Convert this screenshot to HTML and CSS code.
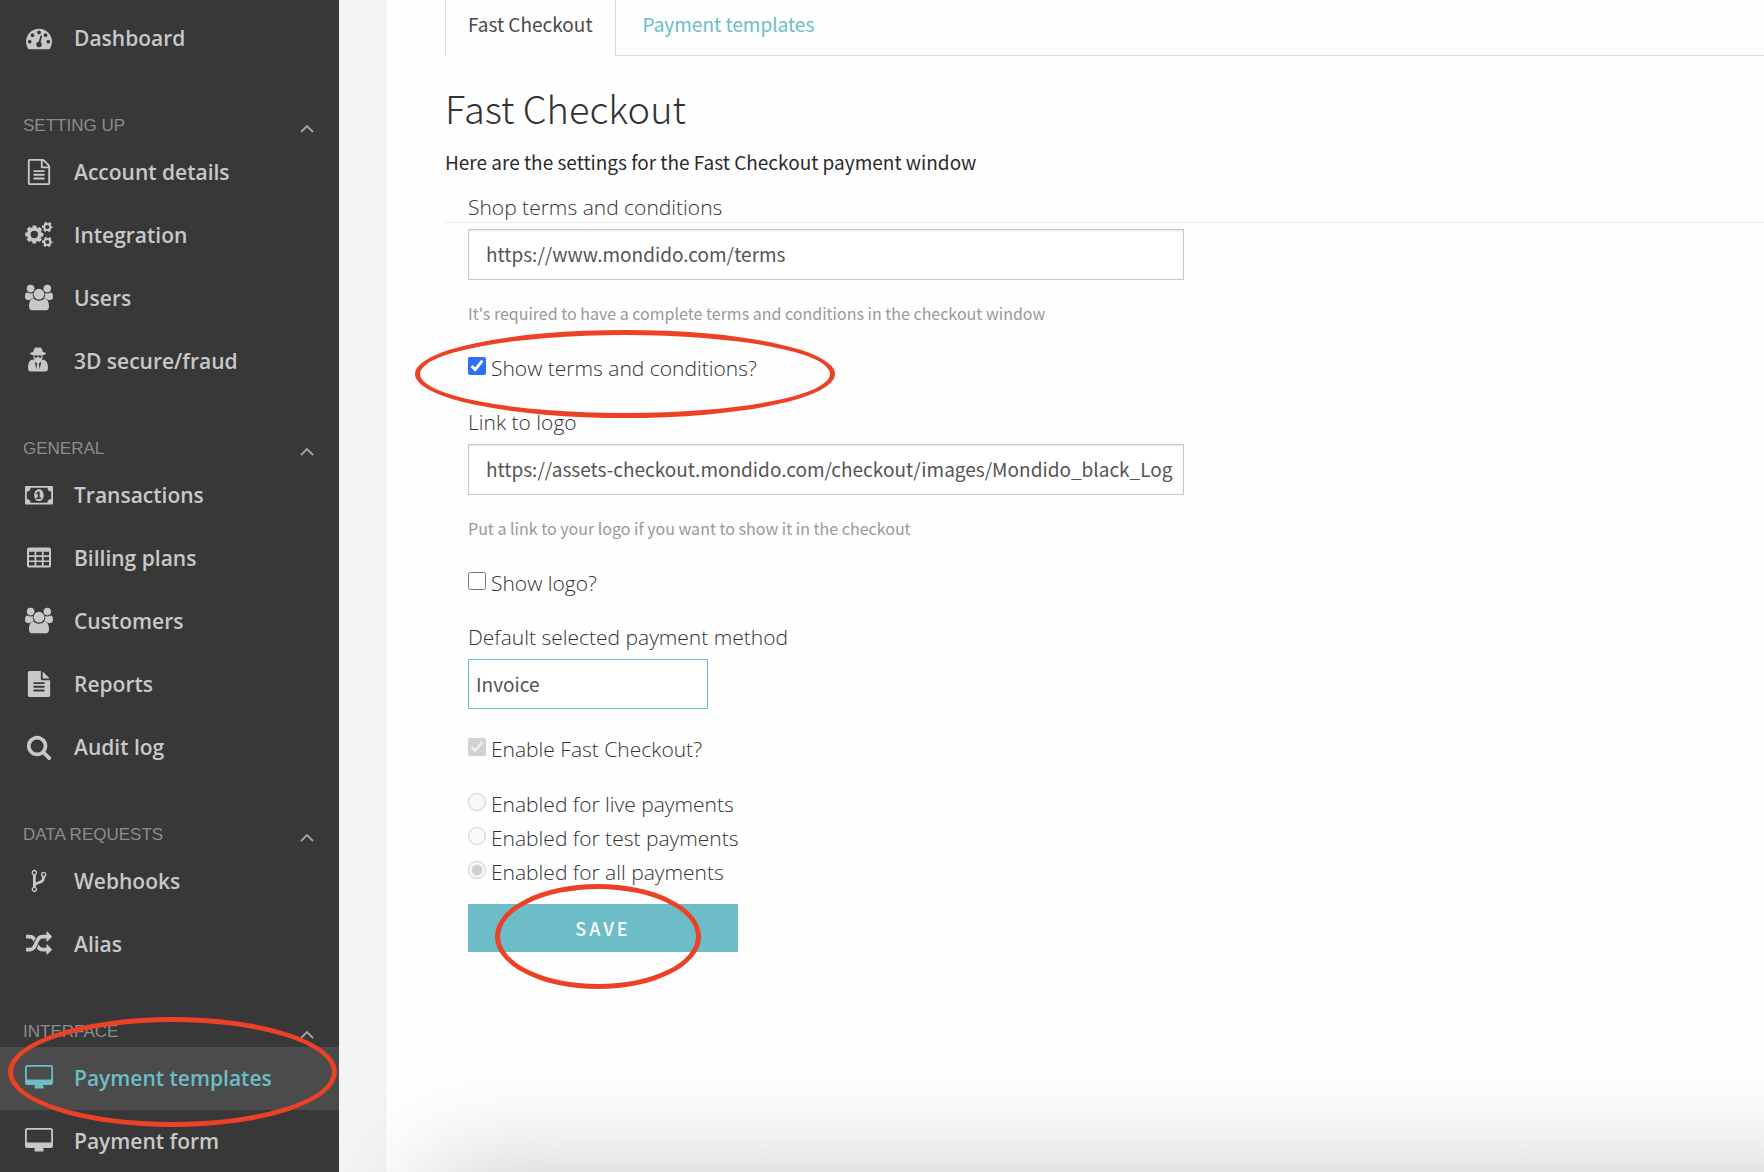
FILE: index.html
```html
<!DOCTYPE html>
<html lang="en">
<head>
<meta charset="utf-8">
<title>Fast Checkout</title>
<link rel="stylesheet" href="styles.css">
</head>
<body>
<svg class="sprite" aria-hidden="true">
  <symbol id="i-dashboard" viewBox="0 0 1792 1792"><path d="M384 1152q0-53-37.5-90.5t-90.5-37.5-90.5 37.5-37.5 90.5 37.5 90.5 90.5 37.5 90.5-37.5 37.5-90.5zm192-448q0-53-37.5-90.5t-90.5-37.5-90.5 37.5-37.5 90.5 37.5 90.5 90.5 37.5 90.5-37.5 37.5-90.5zm428 481l101-382q6-26-7.5-48.5t-38.5-29.5-48 6.5-30 39.5l-101 382q-60 5-107 43.5t-63 98.5q-20 77 20 146t117 89 146-20 89-117q16-60-6-117t-72-91zm660-33q0-53-37.5-90.5t-90.5-37.5-90.5 37.5-37.5 90.5 37.5 90.5 90.5 37.5 90.5-37.5 37.5-90.5zm-640-640q0-53-37.5-90.5t-90.5-37.5-90.5 37.5-37.5 90.5 37.5 90.5 90.5 37.5 90.5-37.5 37.5-90.5zm448 192q0-53-37.5-90.5t-90.5-37.5-90.5 37.5-37.5 90.5 37.5 90.5 90.5 37.5 90.5-37.5 37.5-90.5zm320 448q0 261-141 483-19 29-54 29h-1402q-35 0-54-29-141-221-141-483 0-182 71-348t191-286 286-191 348-71 348 71 286 191 191 286 71 348z"/></symbol>
  <symbol id="i-file-o" viewBox="0 0 1792 1792"><path d="M1596 380q28 28 48 76t20 88v1152q0 40-28 68t-68 28h-1344q-40 0-68-28t-28-68v-1600q0-40 28-68t68-28h896q40 0 88 20t76 48zm-444-244v376h376q-10-29-22-41l-313-313q-12-12-41-22zm384 1528v-1024h-416q-40 0-68-28t-28-68v-416h-768v1536h1280zm-1024-864q0-14 9-23t23-9h704q14 0 23 9t9 23v64q0 14-9 23t-23 9h-704q-14 0-23-9t-9-23v-64zm736 224q14 0 23 9t9 23v64q0 14-9 23t-23 9h-704q-14 0-23-9t-9-23v-64q0-14 9-23t23-9h704zm0 256q14 0 23 9t9 23v64q0 14-9 23t-23 9h-704q-14 0-23-9t-9-23v-64q0-14 9-23t23-9h704z"/></symbol>
  <symbol id="i-file" viewBox="0 0 1792 1792"><path d="M1596 476q14 14 28 36h-472v-472q22 14 36 28zm-476 164h544v1056q0 40-28 68t-68 28h-1344q-40 0-68-28t-28-68v-1600q0-40 28-68t68-28h800v544q0 40 28 68t68 28zm160 736v-64q0-14-9-23t-23-9h-704q-14 0-23 9t-9 23v64q0 14 9 23t23 9h704q14 0 23-9t9-23zm0-256v-64q0-14-9-23t-23-9h-704q-14 0-23 9t-9 23v64q0 14 9 23t23 9h704q14 0 23-9t9-23zm0-256v-64q0-14-9-23t-23-9h-704q-14 0-23 9t-9 23v64q0 14 9 23t23 9h704q14 0 23-9t9-23z"/></symbol>
  <symbol id="i-search" viewBox="0 0 1792 1792"><path d="M1216 832q0-185-131.5-316.5t-316.5-131.5-316.5 131.5-131.5 316.5 131.5 316.5 316.5 131.5 316.5-131.5 131.5-316.5zm512 832q0 52-38 90t-90 38q-54 0-90-38l-343-342q-179 124-399 124-143 0-273.5-55.5t-225-150-150-225-55.5-273.5 55.5-273.5 150-225 225-150 273.5-55.5 273.5 55.5 225 150 150 225 55.5 273.5q0 220-124 399l343 343q37 37 37 90z"/></symbol>
  <symbol id="i-random" viewBox="0 0 1792 1792"><path d="M666 481q-60 92-137 273-22-45-37-72.5t-40.5-63.5-51-56.5-63-35-81.5-14.5h-224q-14 0-23-9t-9-23v-192q0-14 9-23t23-9h224q250 0 410 225zm1126 799q0 14-9 23l-320 320q-9 9-23 9-13 0-22.5-9.5t-9.5-22.5v-192q-32 0-85 .5t-81 1-73-1-71-5-64-10.5-63-18.5-58-28.5-59-40-55-53.5-56-69.5q59-93 136-273 22 45 37 72.5t40.5 63.5 51 56.5 63 35 81.5 14.5h256v-192q0-14 9-23t23-9q12 0 24 10l319 319q9 9 9 23zm0-896q0 14-9 23l-320 320q-9 9-23 9-13 0-22.5-9.5t-9.5-22.5v-192h-256q-48 0-87 15t-69 45-51 61.5-45 77.5q-32 62-78 171-29 66-49.5 111t-54 105-64 100-74 83-90 68.5-106.5 42-128 16.5h-224q-14 0-23-9t-9-23v-192q0-14 9-23t23-9h224q48 0 87-15t69-45 51-61.5 45-77.5q32-62 78-171 29-66 49.5-111t54-105 64-100 74-83 90-68.5 106.5-42 128-16.5h256v-192q0-14 9-23t23-9q12 0 24 10l319 319q9 9 9 23z"/></symbol>
  <symbol id="i-fork" viewBox="0 0 1792 1792"><path d="M672 1472q0-40-28-68t-68-28-68 28-28 68 28 68 68 28 68-28 28-68zm0-1152q0-40-28-68t-68-28-68 28-28 68 28 68 68 28 68-28 28-68zm640 128q0-40-28-68t-68-28-68 28-28 68 28 68 68 28 68-28 28-68zm96 0q0 52-26 96.5t-70 69.5q-2 287-226 414-67 38-203 81-128 40-169.5 71t-41.5 100v26q44 25 70 69.5t26 96.5q0 80-56 136t-136 56-136-56-56-136q0-52 26-96.5t70-69.5v-820q-44-25-70-69.5t-26-96.5q0-80 56-136t136-56 136 56 56 136q0 52-26 96.5t-70 69.5v497q54-26 154-57 55-17 87.5-29.5t70.5-31 59-39.5 40.5-51 28-69.5 8.5-91.5q-44-25-70-69.5t-26-96.5q0-80 56-136t136-56 136 56 56 136z"/></symbol>
  <symbol id="i-cogs" viewBox="0 0 28 28"><g fill="none" stroke="currentColor">
    <circle cx="9.300" cy="13.500" r="5.600" stroke-width="3.800"/><circle cx="9.300" cy="13.500" r="7.700" stroke-width="2.800" stroke-dasharray="3.700 2.347" stroke-dashoffset="1.850"/>
    <circle cx="22.300" cy="6" r="3.100" stroke-width="2"/><circle cx="22.300" cy="6" r="4.400" stroke-width="1.900" stroke-dasharray="2.300 2.308" stroke-dashoffset="1.150"/>
    <circle cx="22.300" cy="21" r="3.100" stroke-width="2"/><circle cx="22.300" cy="21" r="4.400" stroke-width="1.900" stroke-dasharray="2.300 2.308" stroke-dashoffset="1.150"/></g></symbol>
  <symbol id="i-users" viewBox="0 0 28 28"><circle cx="5.600" cy="4.600" r="3.800"/><circle cx="22.300" cy="4.600" r="3.800"/><circle cx="14" cy="10.200" r="5.400"/>
    <path d="M2.600 8.500c1 .6 2 .9 3 .9s1.500-.1 2.200-.4c-.3 2.100.2 4 1.400 5.600-1.700 0-3 .4-4.200 1.500H3c-2 0-3-1-3-3 0-2.500.5-4.600 2.600-4.600zM25.400 8.500c-1 .6-2 .9-3 .9s-1.500-.1-2.200-.4c.3 2.100-.2 4-1.400 5.600 1.700 0 3 .4 4.200 1.500h2c2 0 3-1 3-3 0-2.500-.5-4.600-2.600-4.600zM8.600 14.800c1.600 1.300 3.200 2 5.400 2s3.800-.7 5.400-2c3.200 0 4.600 2.900 4.600 7.600 0 2.600-1.400 3.900-3.800 3.900H7.800C5.400 26.300 4 25 4 22.400c0-4.700 1.400-7.600 4.600-7.600z"/></symbol>
  <symbol id="i-secret" viewBox="0 0 28 28"><path d="M9.500 1.300c.8-1.300 2.200-.5 3.500-.5s2.700-.8 3.500.5c.7 1.100 1 2.400 1.300 3.700 2 .4 3.200.9 3.200 1.500 0 .9-1.400 1.400-3.600 1.700.3 2.400-.1 3.900-.8 5.200l1.800-.8c3.400 1 4.600 4.400 4.600 8.600 0 2-1 3.300-3 3.300H6c-2 0-3-1.300-3-3.300 0-4.200 1.100-7.500 4.200-8.600l2.200.8c-.7-1.300-1.100-2.800-.8-5.200C6.400 7.900 5 7.400 5 6.500c0-.6 1.200-1.100 3.200-1.500.3-1.300.6-2.600 1.300-3.700z"/>
    <path class="cut" d="M9.200 8.500h7.600l-.5 2c-1.200.8-2.500.2-3-1.200h-.6c-.5 1.400-1.800 2-3 1.200zM9.800 14.800l2.400 1.700-.9 6zM16.200 14.800l-2.400 1.700.9 6z"/></symbol>
  <symbol id="i-money" viewBox="0 0 28 28"><path fill-rule="evenodd" d="M1 5h26q1 0 1 1v16.500q0 1-1 1H1q-1 0-1-1V6q0-1 1-1zm4.500 1.800A3.700 3.700 0 0 1 1.800 10.500v7.500a3.700 3.700 0 0 1 3.700 3.700h17a3.700 3.700 0 0 1 3.700-3.700v-7.500a3.700 3.700 0 0 1-3.700-3.700zM14 8.300c2.800 0 4.700 2.700 4.700 5.900S16.800 20.100 14 20.100s-4.700-2.700-4.700-5.900S11.200 8.300 14 8.300zm-.9 2.200-2.300 2 .9 1 1.100-.9v4h-1.600v1.400h5v-1.400h-1.500v-6.100z"/></symbol>
  <symbol id="i-table" viewBox="0 0 28 28"><path fill-rule="evenodd" d="M4 3.500h20q2 0 2 2v16q0 2-2 2H4q-2 0-2-2v-16q0-2 2-2zM4 7.800v3.500h5.600V7.800zm7.300 0v3.500h5.600V7.800zm7.300 0v3.500H24V7.800zM4 13v3.400h5.600V13zm7.300 0v3.400h5.600V13zm7.300 0v3.400H24V13zM4 18.100v3.500h5.600v-3.500zm7.300 0v3.500h5.600v-3.500zm7.300 0v3.500H24v-3.500z"/></symbol>
  <symbol id="i-desktop" viewBox="0 0 28 28"><path fill-rule="evenodd" d="M2.200 0h23.600Q28 0 28 2.200v15.600q0 2.200-2.200 2.200H18c0 1 .7 1.700.7 2.400q0 1.100-1 1.100H10.300q-1 0-1-1.100c0-.7.7-1.400.7-2.400H2.200Q0 20 0 17.800V2.200Q0 0 2.200 0zm.2 1.700q-.6 0-.6.600v12.300h24.400V2.300q0-.6-.6-.6z" transform="translate(0 1)"/></symbol>
  <symbol id="i-up" viewBox="0 0 14 9"><path d="M1 8l6-6 6 6" fill="none" stroke="currentColor" stroke-width="1.800"/></symbol>
</svg>

<div class="layout">
  <nav class="sidebar" aria-label="Main">
    <a class="item" href="#"><svg class="icon glyph"><use href="#i-dashboard"/></svg>Dashboard</a>

    <h2 class="section">SETTING UP<svg class="chevron"><use href="#i-up"/></svg></h2>
    <a class="item" href="#"><svg class="icon glyph"><use href="#i-file-o"/></svg>Account details</a>
    <a class="item" href="#"><svg class="icon"><use href="#i-cogs"/></svg>Integration</a>
    <a class="item" href="#"><svg class="icon"><use href="#i-users"/></svg>Users</a>
    <a class="item" href="#"><svg class="icon"><use href="#i-secret"/></svg>3D secure/fraud</a>

    <h2 class="section">GENERAL<svg class="chevron"><use href="#i-up"/></svg></h2>
    <a class="item" href="#"><svg class="icon"><use href="#i-money"/></svg>Transactions</a>
    <a class="item" href="#"><svg class="icon"><use href="#i-table"/></svg>Billing plans</a>
    <a class="item" href="#"><svg class="icon"><use href="#i-users"/></svg>Customers</a>
    <a class="item" href="#"><svg class="icon glyph"><use href="#i-file"/></svg>Reports</a>
    <a class="item" href="#"><svg class="icon glyph"><use href="#i-search"/></svg>Audit log</a>

    <h2 class="section">DATA REQUESTS<svg class="chevron"><use href="#i-up"/></svg></h2>
    <a class="item" href="#"><svg class="icon glyph"><use href="#i-fork"/></svg>Webhooks</a>
    <a class="item" href="#"><svg class="icon glyph"><use href="#i-random"/></svg>Alias</a>

    <h2 class="section">INTERFACE<svg class="chevron"><use href="#i-up"/></svg></h2>
    <a class="item active" href="#" aria-current="page"><svg class="icon"><use href="#i-desktop"/></svg>Payment templates<span class="ring ring-nav"></span></a>
    <a class="item" href="#"><svg class="icon"><use href="#i-desktop"/></svg>Payment form</a>
  </nav>

  <div class="stage">
    <main class="panel">
      <div class="tabs">
        <a class="tab current" href="#">Fast Checkout</a>
        <a class="tab" href="#">Payment templates</a>
      </div>

      <header class="intro">
        <h1 class="title">Fast Checkout</h1>
        <p class="lead">Here are the settings for the Fast Checkout payment window</p>
      </header>

      <form class="form">
        <label class="label" for="terms">Shop terms and conditions</label>
        <input class="text" id="terms" type="text" value="https://www.mondido.com/terms">
        <p class="help">It's required to have a complete terms and conditions in the checkout window</p>
        <div class="check spaced">
          <input class="box" id="show-terms" type="checkbox" checked>
          <label for="show-terms">Show terms and conditions?</label>
          <span class="ring ring-terms"></span>
        </div>

        <label class="label" for="logo">Link to logo</label>
        <input class="text" id="logo" type="text" value="https://assets-checkout.mondido.com/checkout/images/Mondido_black_Log">
        <p class="help">Put a link to your logo if you want to show it in the checkout</p>
        <div class="check spaced">
          <input class="box" id="show-logo" type="checkbox">
          <label for="show-logo">Show logo?</label>
        </div>

        <label class="label" for="method">Default selected payment method</label>
        <select class="select" id="method"><option>Invoice</option></select>

        <div class="check enable">
          <input class="box" id="enable" type="checkbox" checked disabled>
          <label for="enable">Enable Fast Checkout?</label>
        </div>

        <div class="check">
          <input class="box" id="live" name="mode" type="radio" disabled>
          <label for="live">Enabled for live payments</label>
        </div>
        <div class="check">
          <input class="box" id="test" name="mode" type="radio" disabled>
          <label for="test">Enabled for test payments</label>
        </div>
        <div class="check">
          <input class="box" id="all" name="mode" type="radio" checked disabled>
          <label for="all">Enabled for all payments</label>
        </div>

        <div class="actions">
          <button class="save" type="button">SAVE</button>
          <span class="ring ring-save"></span>
        </div>
      </form>
    </main>
  </div>
</div>
</body>
</html>
```
FILE: styles.css
```css
*, *::before, *::after { box-sizing: border-box; }

body {
  margin: 0;
  background: #fff;
  color: #333;
  font-family: "Noto Sans CJK SC", "Open Sans", sans-serif;
  font-size: 19px;
}

.sprite { display: none; }

.layout {
  display: flex;
  height: 100vh;
  overflow: hidden;
}

/* Sidebar */
.sidebar {
  position: relative;
  z-index: 1;
  flex: 0 0 339px;
  padding-top: 7px;
  background: #383838;
  font-family: "Open Sans", sans-serif;
}

.item {
  position: relative;
  display: flex;
  align-items: center;
  gap: 21px;
  height: 63px;
  padding: 0 0 2px 25px;
  color: #c8c8c8;
  font-size: 21px;
  font-weight: 600;
  text-decoration: none;
}

.item.active {
  background: #4b4b4b;
  color: #6cbdc8;
}

.icon {
  flex: none;
  width: 28px;
  height: 28px;
  fill: currentColor;
}

.glyph { height: 26px; }

.cut { fill: #383838; }

.section {
  display: flex;
  justify-content: space-between;
  align-items: flex-start;
  height: 71px;
  margin: 0;
  padding: 46px 25px 0 23px;
  color: #8c8c8c;
  font-family: "Liberation Sans", sans-serif;
  font-size: 17px;
  font-weight: 400;
  line-height: 20px;
}

.chevron {
  width: 14px;
  height: 9px;
  margin-top: 8px;
  color: #a5a5a5;
}

/* Content */
.stage {
  position: relative;
  flex: 1;
  min-width: 0;
  padding-left: 46px;
  background: #f4f4f4;
}

.stage::after {
  content: "";
  position: absolute;
  top: 100%;
  left: 90px;
  right: -160px;
  height: 300px;
  box-shadow: 0 0 110px rgba(0, 0, 0, 0.21);
  pointer-events: none;
}

.panel {
  min-height: 100%;
  padding-left: 59px;
  background: #fefefe;
  border-left: 1px solid #eee;
}

.tabs {
  display: flex;
  gap: 4px;
  height: 56px;
  border-bottom: 1px solid #ddd;
}

.tab {
  height: 56px;
  padding: 0 22px;
  border: solid transparent;
  border-width: 0 1px;
  color: #6cbdc8;
  line-height: 48px;
  text-decoration: none;
}

.tab.current {
  border-color: #ddd;
  background: #fefefe;
  color: #4a4a4a;
}

.intro {
  padding: 26px 0 47px;
  border-bottom: 1px solid #eee;
}

.title {
  margin: 0;
  font-size: 38px;
  font-weight: 300;
  line-height: 52px;
}

.lead {
  margin: 14px 0 0;
  color: #2b2b2b;
  line-height: 27px;
}

.form {
  width: 739px;
  margin-top: -33px;
  padding-left: 23px;
}

.label,
.check {
  font-family: "Open Sans", sans-serif;
  font-size: 21px;
  font-weight: 300;
  line-height: 34px;
}

.label {
  display: block;
  margin-bottom: 5px;
}

.text,
.select {
  display: block;
  border: 1px solid #c8c8c8;
  border-radius: 0;
  background: #fff;
  color: #555;
  font: inherit;
}

.text {
  width: 100%;
  height: 51px;
  padding: 0 8px 2px 17px;
  box-shadow: inset 0 1px 2px rgba(0, 0, 0, 0.1);
}

.help {
  margin: 21px 0 26px;
  color: #999;
  font-size: 16px;
  line-height: 24px;
}

.check {
  position: relative;
  display: flex;
  align-items: center;
  gap: 5px;
}

.spaced { margin-bottom: 20px; }

.box {
  width: 18px;
  height: 18px;
  margin: 0 0 5px;
  accent-color: #2f6ff6;
}

.select {
  width: 240px;
  height: 50px;
  padding: 0 7px 2px;
  border-color: #6cbdc8;
  appearance: none;
}

.enable { margin: 23px 0 21px; }

.actions {
  position: relative;
  margin-top: 15px;
}

.save {
  display: block;
  width: 270px;
  height: 48px;
  padding: 0;
  border: 0;
  background: #6cbdc8;
  color: #fff;
  font: inherit;
  font-size: 18px;
  font-weight: 500;
  letter-spacing: 3px;
}

/* Hand-drawn style highlights over the controls */
.ring {
  position: absolute;
  border: 5px solid #ed4126;
  border-radius: 50%;
  pointer-events: none;
}

.ring-nav {
  top: -30px;
  left: 8px;
  z-index: 1;
  width: 329px;
  height: 110px;
}

.ring-terms {
  top: -21px;
  left: -53px;
  width: 420px;
  height: 88px;
}

.ring-save {
  top: -20px;
  left: 27px;
  width: 206px;
  height: 105px;
}
```
